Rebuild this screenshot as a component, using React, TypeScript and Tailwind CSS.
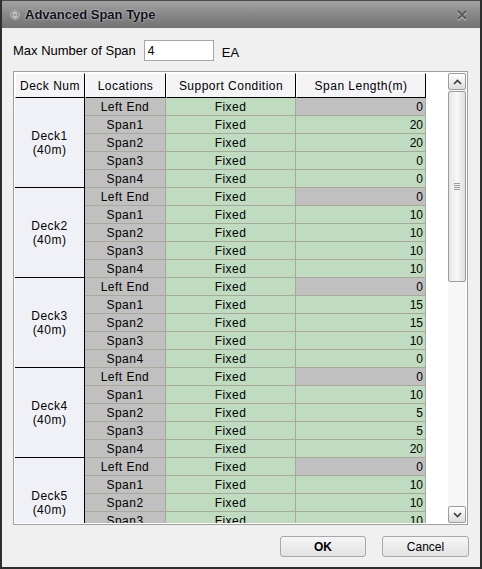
const DECKS: { name: string; spans: number[] }[] = [
  { name: 'Deck1', spans: [0, 20, 20, 0, 0] },
  { name: 'Deck2', spans: [0, 10, 10, 10, 10] },
  { name: 'Deck3', spans: [0, 15, 15, 10, 0] },
  { name: 'Deck4', spans: [0, 10, 5, 5, 20] },
  { name: 'Deck5', spans: [0, 10, 10, 10, 10] },
];

const LOCATIONS = ['Left End', 'Span1', 'Span2', 'Span3', 'Span4'];

const FONT = "font-['Liberation_Sans',Arial,sans-serif]";

function TitleIcon() {
  return (
    <svg width="10" height="10" viewBox="0 0 10 10">
      <circle cx="5" cy="5" r="4.5" fill="#9a9a9a" stroke="#b8b8b8" strokeWidth="0.8" />
      <path d="M3 4.2 L5 2.4 L7 4.2 M3 5.8 L5 7.6 L7 5.8" fill="none" stroke="#f4f4f4" strokeWidth="1" />
    </svg>
  );
}

function CloseIcon() {
  return (
    <svg width="12" height="12" viewBox="0 0 12 12">
      <path d="M2 2 L10 10 M10 2 L2 10" stroke="#c8c8c8" strokeWidth="2.4" transform="translate(0 1)" />
      <path d="M2 2 L10 10 M10 2 L2 10" stroke="#5c5c5c" strokeWidth="2" />
    </svg>
  );
}

function HeaderCell({ label, w }: { label: string; w: string }) {
  return (
    <div
      className={`${w} h-full flex items-center justify-center bg-[#f4f4f6] border-t border-l border-t-white border-l-white border-r border-b border-r-black border-b-black text-[12px] tracking-[0.04em] text-black`}
    >
      {label}
    </div>
  );
}

function DeckBlock({ name, spans }: { name: string; spans: number[] }) {
  return (
    <div className="flex">
      <div className="w-[70px] h-[90px] shrink-0 flex flex-col items-center justify-center bg-[#f0f1f6] border-r border-b border-black text-[12px] leading-[14px] tracking-[0.04em] text-black">
        <span>{name}</span>
        <span>(40m)</span>
      </div>
      <div className="flex flex-col">
        {LOCATIONS.map((loc, i) => (
          <div key={loc} className="flex h-[18px]">
            <div className="w-[81px] flex items-center justify-center bg-[#c0c0c0] border-r border-b border-[#aca899] text-[12px] tracking-[0.04em] text-black">
              {loc}
            </div>
            <div className="w-[130px] flex items-center justify-center bg-[#c0dcc0] border-r border-b border-[#aca899] text-[12px] tracking-[0.04em] text-black">
              Fixed
            </div>
            <div
              className={`w-[130px] flex items-center justify-end pr-[2px] border-r border-b border-[#aca899] text-[12px] text-black ${i === 0 ? 'bg-[#c0c0c0]' : 'bg-[#c0dcc0]'}`}
            >
              {spans[i]}
            </div>
          </div>
        ))}
      </div>
    </div>
  );
}

function Scrollbar() {
  return (
    <div className="w-[18px] h-full flex flex-col bg-[#f7f7f7]">
      <div className="h-[17px] shrink-0 flex items-center justify-center rounded-[2px] border border-[#9c9c9c] bg-gradient-to-b from-white to-[#dcdcdc]">
        <svg width="9" height="6" viewBox="0 0 9 6">
          <path d="M1 5 L4.5 1.5 L8 5" fill="none" stroke="#3a3a3a" strokeWidth="1.6" />
        </svg>
      </div>
      <div className="h-[191px] shrink-0 mt-[1px] flex items-center justify-center rounded-[2px] border border-[#9c9c9c] bg-gradient-to-r from-[#e6e6e6] via-[#f7f7f7] to-[#e0e0e0]">
        <div className="flex flex-col gap-[1px]">
          <div className="w-[6px] h-px bg-[#9a9a9a]" />
          <div className="w-[6px] h-px bg-[#9a9a9a]" />
          <div className="w-[6px] h-px bg-[#9a9a9a]" />
          <div className="w-[6px] h-px bg-[#9a9a9a]" />
        </div>
      </div>
      <div className="flex-1" />
      <div className="h-[17px] shrink-0 flex items-center justify-center rounded-[2px] border border-[#9c9c9c] bg-gradient-to-b from-white to-[#dcdcdc]">
        <svg width="9" height="6" viewBox="0 0 9 6">
          <path d="M1 1 L4.5 4.5 L8 1" fill="none" stroke="#3a3a3a" strokeWidth="1.6" />
        </svg>
      </div>
    </div>
  );
}

export default function App() {
  return (
    <div className={`${FONT} w-[482px] h-[569px] flex flex-col bg-[#f0f0f0] border-2 border-t-0 border-[#2e2e2e] text-black`}>
      {/* title bar */}
      <div className="h-[28px] shrink-0 flex items-center pl-[8px] pr-[12px] bg-gradient-to-b from-[#a2a2a2] via-[#888888] to-[#727272] border-t border-[#4a4a4a]">
        <TitleIcon />
        <span className="ml-[5px] text-[13px] font-bold text-[#10101a] [text-shadow:0_0_2px_#e8e8e8]">
          Advanced Span Type
        </span>
        <div className="flex-1" />
        <CloseIcon />
      </div>

      {/* max number */}
      <div className="flex items-center pl-[11px] mt-[12px] h-[21px]">
        <span className="text-[13px]">Max Number of Span</span>
        <div className="ml-[8px] w-[70px] h-[21px] border border-[#a6a6a6] bg-white flex items-center pl-[3px] text-[12px]">
          4
        </div>
        <span className="ml-[8px] mt-[4px] text-[13px]">EA</span>
      </div>

      {/* grid */}
      <div className="ml-[11px] mt-[10px] w-[455px] h-[454px] border border-[#a0a0a0] bg-white p-px flex">
        <div className="flex flex-col w-[411px] overflow-hidden">
          <div className="h-[25px] shrink-0 flex">
            <HeaderCell label="Deck Num" w="w-[70px]" />
            <HeaderCell label="Locations" w="w-[81px]" />
            <HeaderCell label="Support Condition" w="w-[130px]" />
            <HeaderCell label="Span Length(m)" w="w-[130px]" />
          </div>
          <div className="flex-1 overflow-hidden">
            {DECKS.map(d => (
              <DeckBlock key={d.name} name={d.name} spans={d.spans} />
            ))}
          </div>
        </div>
        <div className="flex-1" />
        <Scrollbar />
      </div>

      {/* buttons */}
      <div className="flex justify-end gap-[16px] pr-[11px] mt-[11px]">
        <button className="w-[86px] h-[21px] rounded-[3px] border border-[#a8a8a8] bg-gradient-to-b from-[#f6f6f6] to-[#e2e2e2] text-[12px] font-bold">
          OK
        </button>
        <button className="w-[87px] h-[21px] rounded-[3px] border border-[#a8a8a8] bg-gradient-to-b from-[#f6f6f6] to-[#e2e2e2] text-[12px]">
          Cancel
        </button>
      </div>
    </div>
  );
}
